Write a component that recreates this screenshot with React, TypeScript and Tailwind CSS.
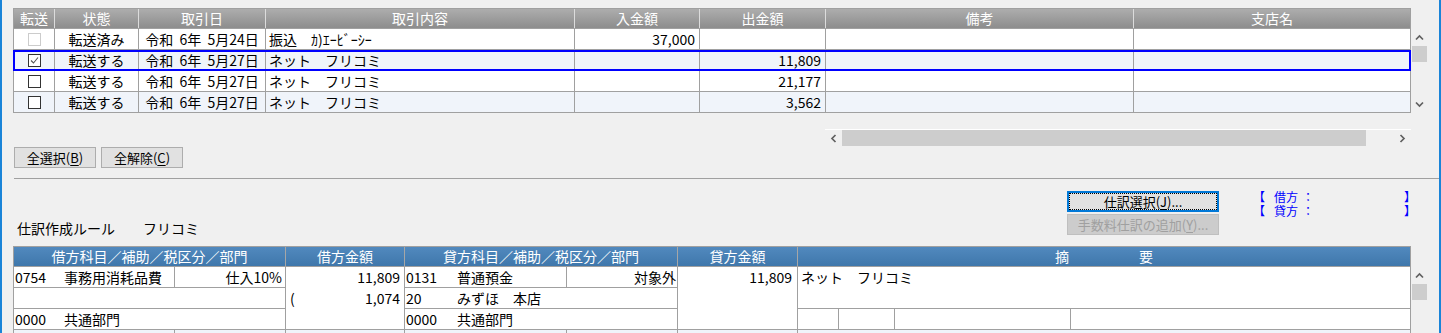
import clsx from 'clsx';

type CheckState = 'disabled' | 'checked' | 'empty';

const topRows: {
  check: CheckState;
  status: string;
  date: string;
  desc: string;
  inAmt: string;
  outAmt: string;
  selected?: boolean;
}[] = [
  { check: 'disabled', status: '転送済み', date: '令和  6年  5月24日', desc: '振込　ｶ)ｴｰﾋﾞｰｼｰ', inAmt: '37,000', outAmt: '' },
  { check: 'checked', status: '転送する', date: '令和  6年  5月27日', desc: 'ネット　フリコミ', inAmt: '', outAmt: '11,809', selected: true },
  { check: 'empty', status: '転送する', date: '令和  6年  5月27日', desc: 'ネット　フリコミ', inAmt: '', outAmt: '21,177' },
  { check: 'empty', status: '転送する', date: '令和  6年  5月27日', desc: 'ネット　フリコミ', inAmt: '', outAmt: '3,562' },
];

const topCols = 'grid grid-cols-[41px_84px_127px_309px_125px_126px_308px_277px]';
const botCols = 'grid grid-cols-[272px_119px_273px_120px_613px]';

const Chevron = ({ dir }: { dir: 'up' | 'down' | 'left' | 'right' }) => {
  const rot = { up: 0, right: 90, down: 180, left: 270 }[dir];
  return (
    <svg width="9" height="9" viewBox="0 0 9 9" style={{ transform: `rotate(${rot}deg)` }}>
      <polyline points="1,6.5 4.5,3 8,6.5" fill="none" stroke="#606060" strokeWidth="1.7" />
    </svg>
  );
};

const Check = ({ state }: { state: CheckState }) => (
  <span
    className={clsx(
      'w-[13px] h-[13px] border bg-white flex items-center justify-center',
      state === 'disabled' ? 'border-[#cccccc]' : 'border-[#333333]'
    )}
  >
    {state === 'checked' && (
      <svg width="11" height="11" viewBox="0 0 11 11">
        <polyline points="2,5.5 4.5,8 9,2.5" fill="none" stroke="#555555" strokeWidth="1.1" />
      </svg>
    )}
  </span>
);

const VScroll = () => (
  <div className="w-[17px] mt-[21px] h-[84px] flex flex-col">
    <div className="h-[17px] flex items-center justify-center">
      <Chevron dir="up" />
    </div>
    <div className="h-[16px] mx-px bg-[#cdcdcd]" />
    <div className="flex-1" />
    <div className="h-[17px] flex items-center justify-center">
      <Chevron dir="down" />
    </div>
  </div>
);

const TopTable = () => {
  const heads = ['転送', '状態', '取引日', '取引内容', '入金額', '出金額', '備考', '支店名'];
  return (
    <div className="w-[1398px] border-t border-l border-[#a0a0a0]">
      <div className={clsx(topCols, 'h-[20px] bg-linear-to-b from-[#adadad] to-[#8d8d8d] border-b border-[#a0a0a0]')}>
        {heads.map((h, i) => (
          <div
            key={h}
            className={clsx(
              'text-white text-center leading-[19px] border-r',
              i === heads.length - 1 ? 'border-[#a0a0a0]' : 'border-[#dcdcdc]'
            )}
          >
            {h}
          </div>
        ))}
      </div>
      {topRows.map((r, i) => (
        <div
          key={i}
          className={clsx(topCols, 'relative h-[21px] leading-[20px]', i % 2 === 1 ? 'bg-[#f0f4fa]' : 'bg-white')}
        >
          <div className="border-r border-b border-[#a0a0a0] flex items-center justify-center">
            <Check state={r.check} />
          </div>
          <div className="border-r border-b border-[#a0a0a0] text-center">{r.status}</div>
          <div className="border-r border-b border-[#a0a0a0] text-center whitespace-pre">{r.date}</div>
          <div className="border-r border-b border-[#a0a0a0] pl-[3px]">{r.desc}</div>
          <div className="border-r border-b border-[#a0a0a0] text-right pr-[4px]">{r.inAmt}</div>
          <div className="border-r border-b border-[#a0a0a0] text-right pr-[4px]">{r.outAmt}</div>
          <div className="border-r border-b border-[#a0a0a0]" />
          <div className="border-r border-b border-[#a0a0a0]" />
          {r.selected && <div className="absolute left-[-1px] top-0 right-0 bottom-0 border-2 border-[#0000ff]" />}
        </div>
      ))}
    </div>
  );
};

const cell = 'border-r border-b border-[#a0a0a0]';

const AccountCell = ({ code, name, tax, codeW, taxPr }: { code?: string; name?: string; tax?: string; codeW: string; taxPr: string }) => (
  <div className={clsx(cell, 'flex')}>
    <div className={clsx('flex border-r border-[#a0a0a0] pl-px', codeW === '49' ? 'w-[161px]' : 'w-[162px]')}>
      <span className={codeW === '49' ? 'w-[49px]' : 'w-[51px]'}>{code}</span>
      <span>{name}</span>
    </div>
    <div className={clsx('flex-1 text-right', taxPr)}>{tax}</div>
  </div>
);

const BottomTable = () => (
  <div className="w-[1398px] border-t border-l border-[#a0a0a0]">
    <div className={clsx(botCols, 'h-[20px] bg-linear-to-b from-[#5189be] to-[#3f77ab] border-b border-[#a0a0a0] text-white leading-[19px]')}>
      <div className="text-center border-r border-[#a6a6a6]">借方科目／補助／税区分／部門</div>
      <div className="text-center border-r border-[#a6a6a6]">借方金額</div>
      <div className="text-center border-r border-[#a6a6a6]">貸方科目／補助／税区分／部門</div>
      <div className="text-center border-r border-[#a6a6a6]">貸方金額</div>
      <div className="flex justify-center gap-[70px] border-r border-[#a0a0a0]">
        <span>摘</span>
        <span>要</span>
      </div>
    </div>
    <div className={clsx(botCols, 'grid-rows-[21px_21px_21px_21px] leading-[20px] bg-white')}>
      <AccountCell code="0754" name="事務用消耗品費" tax="仕入10%" codeW="49" taxPr="pr-[3px]" />
      <div className={clsx(cell, 'row-span-3 flex flex-col')}>
        <div className="h-[21px] text-right pr-[4px]">11,809</div>
        <div className="h-[21px] flex justify-between px-[4px]">
          <span>(</span>
          <span>1,074</span>
        </div>
      </div>
      <AccountCell code="0131" name="普通預金" tax="対象外" codeW="51" taxPr="pr-px" />
      <div className={clsx(cell, 'row-span-3 text-right pr-[5px]')}>11,809</div>
      <div className={clsx(cell, 'row-span-2 pl-[3px]')}>ネット　フリコミ</div>
      <div className={cell} />
      <div className={clsx(cell, 'col-start-3 flex pl-px')}>
        <span className="w-[51px]">20</span>
        <span>みずほ　本店</span>
      </div>
      <div className={clsx(cell, 'col-start-1 flex pl-px')}>
        <span className="w-[49px]">0000</span>
        <span>共通部門</span>
      </div>
      <div className={clsx(cell, 'col-start-3 flex pl-px')}>
        <span className="w-[51px]">0000</span>
        <span>共通部門</span>
      </div>
      <div className={clsx(cell, 'col-start-5 grid grid-cols-[41px_56px_176px_1fr]')}>
        <div className="border-r border-[#a0a0a0]" />
        <div className="border-r border-[#a0a0a0]" />
        <div className="border-r border-[#a0a0a0]" />
        <div />
      </div>
      <div className={clsx(cell, 'col-start-1 flex bg-[#f0f4fa]')}>
        <div className="w-[161px] border-r border-[#a0a0a0]" />
      </div>
      <div className={clsx(cell, 'bg-[#f0f4fa]')} />
      <div className={clsx(cell, 'flex bg-[#f0f4fa]')}>
        <div className="w-[162px] border-r border-[#a0a0a0]" />
      </div>
      <div className={clsx(cell, 'bg-[#f0f4fa]')} />
      <div className={clsx(cell, 'bg-[#f0f4fa]')} />
    </div>
  </div>
);

const App = () => {
  return (
    <div className="w-[1441px] h-[333px] overflow-hidden bg-[#f0f0f0] border-x-2 border-[#1a84d8] pl-[11px] pt-[8px] text-[14px] text-black font-['Noto_Sans_CJK_JP',sans-serif]">
      <div className="flex">
        <TopTable />
        <VScroll />
      </div>

      <div className="ml-[812px] mt-[16px] w-[586px] h-[17px] border-t border-white flex">
        <div className="w-[17px] flex items-center justify-center">
          <Chevron dir="left" />
        </div>
        <div className="w-[524px] bg-[#cdcdcd]" />
        <div className="flex-1" />
        <div className="w-[17px] flex items-center justify-center">
          <Chevron dir="right" />
        </div>
      </div>

      <div className="flex gap-[5px] ml-px mt-px text-[13px]">
        <button className="w-[82px] h-[21px] bg-[#e1e1e1] border border-[#adadad] leading-[19px]">
          全選択(<span className="underline underline-offset-2">B</span>)
        </button>
        <button className="w-[82px] h-[21px] bg-[#e1e1e1] border border-[#adadad] leading-[19px]">
          全解除(<span className="underline underline-offset-2">C</span>)
        </button>
      </div>

      <div className="h-px bg-[#a0a0a0] ml-px mt-[10px]" />

      <div className="flex h-[44px] mt-[12px]">
        <div className="w-[1054px] pl-[4px] mt-[27px] h-[20px] leading-[20px] flex">
          <span className="w-[126px]">仕訳作成ルール</span>
          <span>フリコミ</span>
        </div>
        <div className="w-[152px] flex flex-col gap-[2px] text-[13px]">
          <button className="h-[21px] bg-[#e1e1e1] border-2 border-[#0078d7] leading-[17px] outline-1 outline-dotted outline-black outline-offset-[-3px]">
            仕訳選択(<span className="underline underline-offset-2">J</span>)...
          </button>
          <button disabled className="h-[21px] bg-[#cccccc] border border-[#bfbfbf] text-[#a0a0a0] leading-[19px]">
            手数料仕訳の追加(<span className="underline underline-offset-2">Y</span>)...
          </button>
        </div>
        <div className="ml-[34px] -mt-px w-[163px] text-[12px] text-[#0000ff]">
          <div className="h-[14px] leading-[14px] flex">
            <span>【</span>
            <span className="ml-[9px]">借方</span>
            <span className="ml-[4px]">：</span>
            <span className="ml-auto">】</span>
          </div>
          <div className="h-[14px] leading-[14px] flex">
            <span>【</span>
            <span className="ml-[9px]">貸方</span>
            <span className="ml-[4px]">：</span>
            <span className="ml-auto">】</span>
          </div>
        </div>
      </div>

      <div className="flex mt-[11px]">
        <BottomTable />
        <VScroll />
      </div>
    </div>
  );
};

export default App;
